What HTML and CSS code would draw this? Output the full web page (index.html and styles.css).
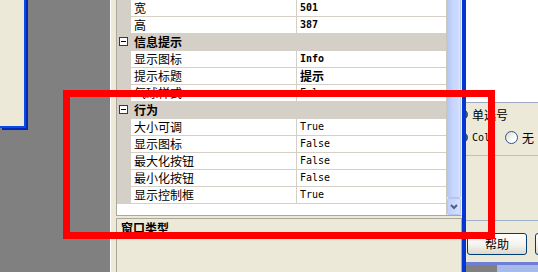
FILE: index.html
```html
<!DOCTYPE html>
<html>
<head>
<meta charset="utf-8">
<link rel="stylesheet" href="styles.css">
</head>
<body>
<div class="desk">
  <div class="left"><div class="win"></div></div>
  <div class="panel">
    <div class="grid">
      <div class="rows">
        <div class="row"><div class="m"></div><div class="k">宽</div><div class="v b">501</div></div>
        <div class="row"><div class="m"></div><div class="k">高</div><div class="v b">387</div></div>
        <div class="row cat"><div class="m"><div class="tog"></div></div><div class="ct">信息提示</div></div>
        <div class="row"><div class="m"></div><div class="k">显示图标</div><div class="v b">Info</div></div>
        <div class="row"><div class="m"></div><div class="k">提示标题</div><div class="v b cj">提示</div></div>
        <div class="row"><div class="m"></div><div class="k">气球样式</div><div class="v">False</div></div>
        <div class="row cat"><div class="m"><div class="tog"></div></div><div class="ct">行为</div></div>
        <div class="row"><div class="m"></div><div class="k">大小可调</div><div class="v">True</div></div>
        <div class="row"><div class="m"></div><div class="k">显示图标</div><div class="v">False</div></div>
        <div class="row"><div class="m"></div><div class="k">最大化按钮</div><div class="v">False</div></div>
        <div class="row"><div class="m"></div><div class="k">最小化按钮</div><div class="v">False</div></div>
        <div class="row"><div class="m"></div><div class="k">显示控制框</div><div class="v">True</div></div>
        <div class="fill"></div>
      </div>
      <div class="vs">
        <div class="thumb"></div>
        <div class="down"><svg width="12" height="15" viewBox="0 0 12 15"><path d="M3 6 L6 9 L9 6" stroke="#4D6185" stroke-width="2" fill="none"/></svg></div>
      </div>
    </div>
    <div class="desc">窗口类型</div>
  </div>
  <div class="edge"></div>
  <div class="right">
    <div class="r-top"></div>
    <div class="opts">
      <div class="opt"><span class="rdot"></span><span class="lbl">单选号</span></div>
      <div class="opt"><span class="rdot"></span><span class="lbl col">Col</span><span class="radio"></span><span class="lbl2">无</span></div>
    </div>
    <div class="mid"></div>
    <div class="btns"><div class="btn">帮助</div><div class="btn"></div></div>
    <div class="task"><div class="t-gray"></div><div class="t-blue"></div></div>
  </div>
</div>
<div class="redbox"></div>
</body>
</html>
```
FILE: styles.css
```css
html, body {
  margin: 0;
  padding: 0;
}
body {
  background: #808080;
  width: 538px;
  height: 272px;
  overflow: hidden;
  position: relative;
  font-family: "Noto Sans CJK SC", sans-serif;
  font-size: 12px;
  color: #000;
}
.desk {
  display: flex;
  height: 272px;
}
.left {
  width: 110px;
  flex: none;
}
.win {
  width: 24px;
  height: 130px;
  margin-top: -4px;
  background: #ECE9D8;
  border-right: 2px solid #0A4BE4;
  border-bottom: 2px solid #0A4BE4;
  box-shadow: 2px 2px 0 #0029B8;
}
.panel {
  width: 346px;
  flex: none;
  background: #ECE9D8;
  border-left: 1px solid #fff;
  padding-left: 5px;
  display: flex;
  flex-direction: column;
}
.grid {
  margin-top: -1px;
  height: 215px;
  border: 1px solid #ACA899;
  border-right-color: #F4F3EE;
  background: #fff;
  display: flex;
  flex: none;
}
.rows {
  width: 329px;
  flex: none;
  border-right: 1px solid #C9C7BE;
  display: flex;
  flex-direction: column;
}
.row {
  display: flex;
  height: 16px;
  line-height: 16px;
  border-bottom: 1px solid #D4D0C8;
  flex: none;
}
.m {
  width: 14px;
  flex: none;
  background: #D4D0C8;
}
.k {
  width: 162px;
  flex: none;
  padding-left: 3px;
  border-right: 1px solid #D4D0C8;
  white-space: nowrap;
  overflow: hidden;
}
.v {
  flex: 1;
  padding-left: 3px;
  font-family: "DejaVu Sans Mono", monospace;
  font-size: 10px;
  white-space: nowrap;
}
.v.b {
  font-weight: bold;
}
.v.cj {
  font-family: "Noto Sans CJK SC", sans-serif;
  font-size: 12px;
}
.cat {
  background: #D4D0C8;
}
.ct {
  padding-left: 3px;
  font-weight: bold;
}
.tog {
  width: 7px;
  height: 7px;
  margin: 3px 0 0 2px;
  border: 1px solid #3A3A3A;
  background: #fff;
  display: flex;
  align-items: center;
  justify-content: center;
}
.tog::after {
  content: "";
  width: 5px;
  height: 1px;
  background: #000;
}
.fill {
  flex: 1;
}
.vs {
  width: 14px;
  flex: none;
  display: flex;
  flex-direction: column;
  background: #EEF2FD;
}
.thumb {
  flex: 1;
  border: 1px solid #B4C6F2;
  border-top: none;
  border-radius: 0 0 2px 2px;
  background: linear-gradient(90deg, #B6C8F5, #C8D7FD 45%, #CBD9FD 80%, #DCE5FD);
}
.down {
  height: 15px;
  flex: none;
  border: 1px solid #B4C6F2;
  border-radius: 2px;
  background: linear-gradient(90deg, #C0D0FA, #CCDAFD 60%, #D8E2FD);
  display: flex;
  justify-content: center;
}
.down svg {
  display: block;
}
.desc {
  margin-top: 2px;
  flex: 1;
  border: 1px solid #ACA899;
  border-bottom: none;
  padding: 2px 4px;
  font-weight: bold;
  line-height: 13px;
}
.edge {
  width: 4px;
  flex: none;
  background: #0636D0;
}
.right {
  width: 72px;
  flex: none;
  background: #ECE9D8;
  display: flex;
  flex-direction: column;
  overflow: hidden;
}
.r-top {
  height: 102px;
  flex: none;
  background: #fff;
  border-bottom: 1px solid #A0A8C0;
}
.opts {
  height: 52px;
  flex: none;
  border-bottom: 1px solid #B4BFD9;
}
.opt {
  height: 23px;
  display: flex;
  align-items: center;
}
.rdot {
  width: 9px;
  height: 9px;
  flex: none;
  margin-left: -9px;
  border: 1px solid #2B4F7D;
  border-radius: 50%;
  background: #3A5A80;
}
.lbl {
  margin-left: 4px;
  white-space: nowrap;
}
.col {
  width: 33px;
  flex: none;
  font-family: "DejaVu Sans Mono", monospace;
  font-size: 10px;
}
.radio {
  width: 11px;
  height: 11px;
  flex: none;
  border: 1px solid #2F557F;
  border-radius: 50%;
  background: linear-gradient(135deg, #DCD9CD, #fff 70%);
}
.lbl2 {
  margin-left: 4px;
}
.mid {
  height: 64px;
  flex: none;
  border-bottom: 1px solid #9DB0CC;
}
.btns {
  padding-top: 12px;
  display: flex;
  gap: 7px;
  flex: none;
}
.btn {
  width: 58px;
  height: 20px;
  flex: none;
  margin-left: 1px;
  border: 1px solid #003C74;
  border-radius: 3px;
  background: linear-gradient(#FFFFFF, #F4F3EE 55%, #DCD8CC);
  display: flex;
  align-items: center;
  justify-content: center;
  line-height: 14px;
  white-space: nowrap;
}
.task {
  margin-top: auto;
  height: 7px;
  border-top: 3px solid #6F7FD6;
  display: flex;
  flex: none;
}
.t-gray {
  width: 31px;
  background: #808080;
}
.t-blue {
  flex: 1;
  background: #A6BAEC;
}
.redbox {
  position: absolute;
  left: 63px;
  top: 90px;
  width: 432px;
  height: 149px;
  border: 7px solid #FF0000;
  box-sizing: border-box;
}
```
